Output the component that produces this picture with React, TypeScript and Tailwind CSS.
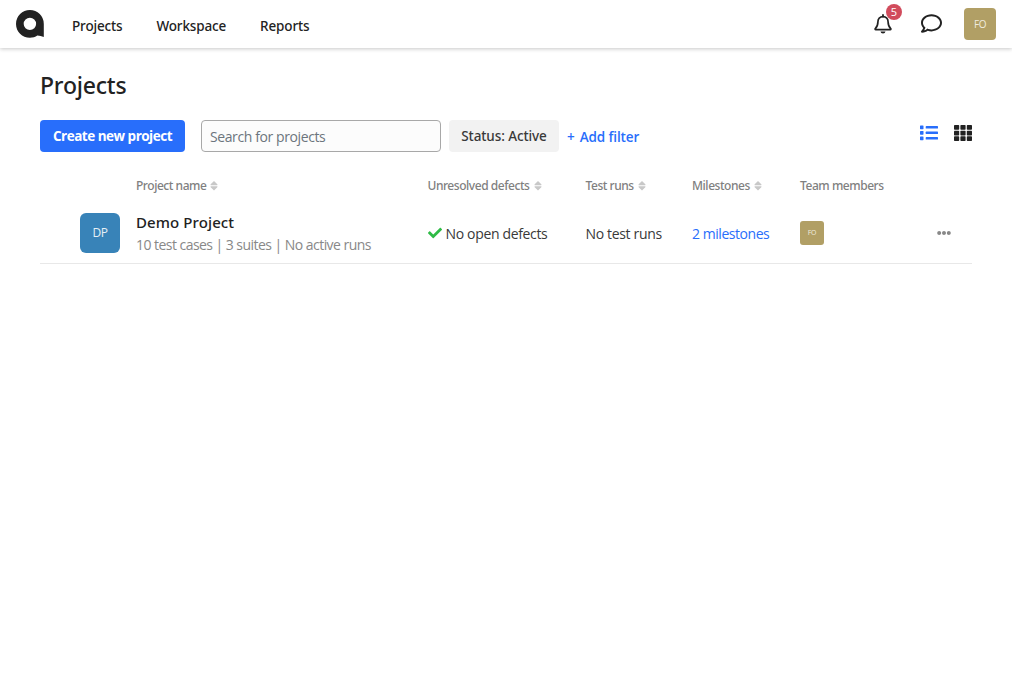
import type { ReactNode } from "react";
import { FaCheck, FaEllipsisH, FaRegComment } from "react-icons/fa";

function Logo() {
  return (
    <svg width="28" height="28" viewBox="0 0 28 28" className="block shrink-0">
      <path
        fill="#222"
        fillRule="evenodd"
        d="M13.900 0A13.900 13.900 0 0 0 0 13.900C0 21.600 6.200 27.800 13.900 27.800c2.800 0 5.400-.8 7.500-2.200 2.200.1 4.300.5 6.400 1.300V13.900A13.900 13.900 0 0 0 13.900 0Zm0 7.700a6.200 6.200 0 1 1 0 12.400 6.200 6.200 0 0 1 0-12.400Z"
      />
    </svg>
  );
}

function Bell() {
  return (
    <svg width="18" height="20" viewBox="0 0 18 20" fill="none" className="block">
      <path
        d="M9 2.600C5.800 2.600 3.900 5 3.900 8c0 4-1.100 5.200-2.600 6.600-.4.500-.2 1 .4 1h14.600c.6 0 .8-.5.4-1C15.200 13.200 14.100 12 14.100 8c0-3-1.900-5.400-5.100-5.400Z"
        stroke="#222"
        strokeWidth="1.700"
        strokeLinejoin="round"
      />
      <path d="M9 1v1.600" stroke="#222" strokeWidth="1.800" strokeLinecap="round" />
      <path d="M6.500 17.600h5A2.500 2.200 0 0 1 9 19.500a2.500 2.200 0 0 1-2.500-1.900Z" fill="#222" />
    </svg>
  );
}

function Sort() {
  return (
    <svg width="8" height="10" viewBox="0 0 8 10" fill="#c8c8c8" className="block">
      <path d="M4 0 7.300 3.200c.4.400.1 1-.4 1H1.100c-.5 0-.8-.6-.4-1ZM4 9.400 7.300 6.200c.4-.4.1-1-.4-1H1.100c-.5 0-.8.600-.4 1Z" />
    </svg>
  );
}

function ListIcon() {
  return (
    <svg width="18" height="16" viewBox="0 0 18 16" fill="#286efb" className="block">
      {[0.5, 6, 11.500].map((y) => (
        <g key={y}>
          <rect x="0" y={y} width="3.500" height="3.700" rx=".6" />
          <rect x="5.700" y={y + 0.600} width="12.300" height="2.400" rx=".6" />
        </g>
      ))}
    </svg>
  );
}

function GridIcon() {
  return (
    <svg width="18" height="16" viewBox="0 0 18 16" fill="#222" className="block">
      {[0, 5.700, 11.300].map((y) =>
        [0, 6.400, 12.800].map((x) => (
          <rect key={`${x}-${y}`} x={x} y={y} width="5.200" height="4.700" rx=".7" />
        )),
      )}
    </svg>
  );
}

function Heading({ children, sortable = true }: { children: ReactNode; sortable?: boolean }) {
  return (
    <div className="flex items-center gap-1">
      <span>{children}</span>
      {sortable && <Sort />}
    </div>
  );
}

const columns =
  "grid grid-cols-[96px_291.500px_158px_106.500px_108px_137px_1fr] items-center";

export default function App() {
  return (
    <div className="min-h-[680px] bg-white font-['Open_Sans','Noto_Sans',sans-serif] text-[#222]">
      <header className="flex h-12 items-center px-4 shadow-[0_1px_4px_rgba(0,0,0,0.22)]">
        <Logo />
        <nav className="ml-7 flex gap-[34px] pt-[3px] font-['Noto_Sans',sans-serif] text-[13.500px] font-medium leading-5 tracking-[-0.15px]">
          <a>Projects</a>
          <a>Workspace</a>
          <a>Reports</a>
        </nav>
        <div className="ml-auto flex items-center">
          <div className="relative mr-[29px]">
            <Bell />
            <span className="absolute -top-[10px] left-[12px] flex size-4 items-center justify-center rounded-full bg-[#d14b5c] text-[11px] leading-4 text-white">
              5
            </span>
          </div>
          <FaRegComment className="mb-[2px] mr-[22px] size-[21px] text-[#222]" />
          <div className="flex size-8 items-center justify-center rounded-[4px] bg-[#b19f65] text-[10px] tracking-[-0.4px] text-[#f0ecdf]">
            FO
          </div>
        </div>
      </header>

      <main className="px-10 pt-[21px]">
        <h1 className="font-['Noto_Sans',sans-serif] text-[23px] font-medium leading-8 tracking-[-0.2px]">Projects</h1>

        <div className="mt-[19px] flex h-8 items-center">
          <button className="h-8 w-[145px] rounded-[4px] bg-[#286efb] text-[13.500px] font-bold tracking-[-0.5px] text-white">
            Create new project
          </button>
          <input
            placeholder="Search for projects"
            className="ml-4 h-8 w-60 rounded-[4px] border border-[#a8a8a8] bg-[#fcfcfc] px-2 text-[14px] tracking-[-0.4px] placeholder:text-[#6c757d]"
          />
          <button className="ml-2 h-8 w-[110px] rounded-[4px] bg-[#f2f2f2] font-['Noto_Sans',sans-serif] text-[13.500px] font-medium tracking-[-0.1px] text-[#393939]">
            Status: Active
          </button>
          <button className="ml-2 flex gap-[5px] pt-[3px] text-[13.500px] font-semibold tracking-[-0.1px] text-[#286efb]">
            <span>+</span>
            <span>Add filter</span>
          </button>
          <div className="mb-[6px] ml-auto flex gap-4">
            <ListIcon />
            <GridIcon />
          </div>
        </div>

        <section className="mt-[17px]">
          <div className={`${columns} h-[34px] font-['Noto_Sans',sans-serif] text-[12px] font-medium tracking-[-0.45px] text-[#808080]`}>
            <span />
            <Heading>Project name</Heading>
            <Heading>Unresolved defects</Heading>
            <Heading>Test runs</Heading>
            <Heading>Milestones</Heading>
            <Heading sortable={false}>Team members</Heading>
          </div>
          <div className={`${columns} h-[61px] border-b border-[#e8e8e8] text-[14px] tracking-[-0.34px] text-[#393939]`}>
            <div className="ml-10 flex size-10 items-center justify-center rounded-[6px] bg-[#3883b8] text-[12px] text-[#e6f0f6]">
              DP
            </div>
            <div>
              <div className="-mt-px font-['Noto_Sans',sans-serif] text-[15px] font-medium leading-6 tracking-[0.1px] text-[#222]">Demo Project</div>
              <div className="text-[14px] leading-[21px] tracking-[-0.54px] text-[#888]">
                10 test cases | 3 suites | No active runs
              </div>
            </div>
            <div className="flex items-center gap-1">
              <FaCheck className="size-[14px] text-[#2fbb46]" />
              <span>No open defects</span>
            </div>
            <span>No test runs</span>
            <a className="tracking-[-0.45px] text-[#286efb]">2 milestones</a>
            <div className="flex size-6 items-center justify-center rounded-[3px] bg-[#b19f65] text-[7px] tracking-[-0.2px] text-[#f0ecdf]">
              FO
            </div>
            <FaEllipsisH className="size-[14px] text-[#888]" />
          </div>
        </section>
      </main>
    </div>
  );
}
